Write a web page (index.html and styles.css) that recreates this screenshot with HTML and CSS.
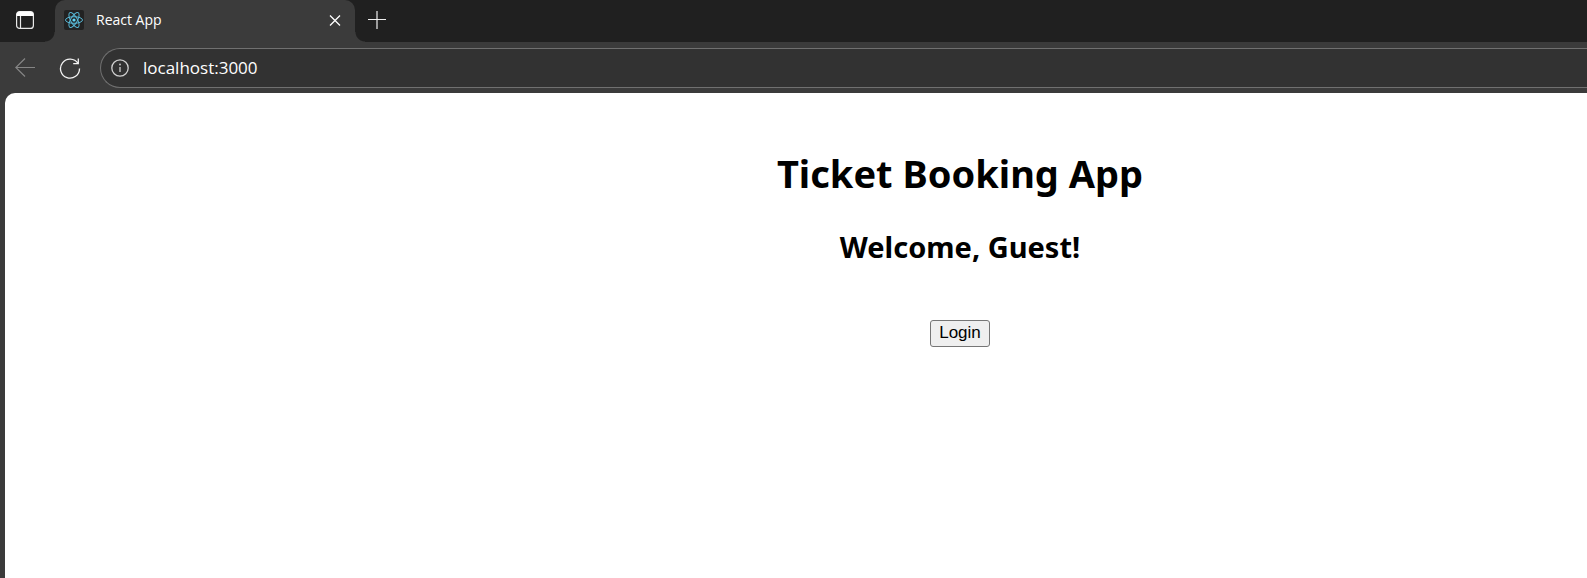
FILE: index.html
```html
<!DOCTYPE html>
<html lang="en">
<head>
<meta charset="utf-8">
<title>React App</title>
<link rel="stylesheet" href="styles.css">
</head>
<body>
<header class="tab-strip">
  <button class="icon-button tab-actions" aria-label="Tab actions">
    <svg width="20" height="20" viewBox="0 0 20 20" fill="none" stroke="#e8e8e8"><rect x="1.6" y="1.6" width="16.8" height="16.8" rx="3" stroke-width="1.2"/><path d="M2 5.500V4.500Q2 2 4.500 2H15.500Q18 2 18 4.500V5.500Z" fill="#fff" stroke="#fff"/><path d="M5.500 6V18" stroke-width="1.200"/></svg>
  </button>
  <div class="tab">
    <svg class="favicon" width="20" height="20" viewBox="0 0 20 20" fill="none" stroke="#58b8d6" stroke-width="1"><rect width="20" height="20" rx="2" fill="#222" stroke="none"/><ellipse cx="10" cy="10" rx="8.500" ry="3.300"/><ellipse cx="10" cy="10" rx="8.500" ry="3.300" transform="rotate(60 10 10)"/><ellipse cx="10" cy="10" rx="8.500" ry="3.300" transform="rotate(120 10 10)"/><circle cx="10" cy="10" r="1.600" fill="#61dafb" stroke="none"/></svg>
    <span class="tab-title">React App</span>
    <button class="icon-button" aria-label="Close tab">
      <svg width="12" height="12" viewBox="0 0 12 12" stroke="#fff" stroke-width="1.300"><path d="M1 1.500L11 11.500M11 1.500L1 11.500"/></svg>
    </button>
  </div>
  <button class="icon-button new-tab" aria-label="New tab">
    <svg width="18" height="18" viewBox="0 0 18 18" stroke="#f0f0f0" stroke-width="1.200"><path d="M9 0V18M0 8.500H18"/></svg>
  </button>
</header>
<nav class="toolbar">
  <button class="icon-button" aria-label="Back">
    <svg width="20" height="20" viewBox="0 0 20 20" fill="none" stroke="#858585" stroke-width="1.200"><path d="M20 9.500H.800M10 .500L.800 9.500L10 18.500"/></svg>
  </button>
  <button class="icon-button" aria-label="Refresh">
    <svg width="22" height="22" viewBox="0 0 22 22" fill="none" stroke="#f4f4f4" stroke-width="1.300"><path d="M19 6.500A9.500 9.500 0 1 0 20.500 11.500M19.300 1.500V6.600H14.200"/></svg>
  </button>
  <div class="address">
    <svg width="18" height="18" viewBox="0 0 18 18" fill="none" stroke="#d0d0d0" stroke-width="1.300"><circle cx="9" cy="9" r="8.200"/><path d="M9 8V13"/><circle cx="9" cy="5.500" r=".900" fill="#d0d0d0" stroke="none"/></svg>
    <input class="url" type="text" value="localhost:3000" aria-label="Address">
  </div>
</nav>
<main class="page">
  <h1 class="title">Ticket Booking App</h1>
  <h2 class="welcome">Welcome, Guest!</h2>
  <button class="login">Login</button>
</main>
</body>
</html>
```
FILE: styles.css
```css
* { box-sizing: border-box; }
body {
  margin: 0;
  min-height: 100vh;
  display: flex;
  flex-direction: column;
  overflow-x: hidden;
  background: #3b3b3b;
  font-family: "Segoe UI", "Open Sans", sans-serif;
}
.icon-button {
  display: flex;
  flex: none;
  padding: 0;
  border: 0;
  background: none;
}
.tab-strip {
  display: flex;
  align-items: stretch;
  height: 42px;
  background: #202020;
}
.tab-actions {
  width: 55px;
  padding: 0 0 2px 15px;
  align-items: center;
  background: #202020;
}
.tab {
  position: relative;
  display: flex;
  align-items: center;
  width: 300px;
  padding: 0 14px 2px 9px;
  border-radius: 10px 10px 0 0;
  background: #3b3b3b;
}
.tab::before,
.tab::after {
  content: "";
  position: absolute;
  bottom: 0;
  width: 10px;
  height: 10px;
}
.tab::before {
  right: 100%;
  background: radial-gradient(circle at 0 0, #202020 9px, #3b3b3b 10px);
}
.tab::after {
  left: 100%;
  background: radial-gradient(circle at 100% 0, #202020 9px, #3b3b3b 10px);
}
.tab-title {
  flex: 1;
  margin-left: 12px;
  padding-bottom: 2px;
  font-size: 14px;
  color: #fff;
}
.new-tab {
  width: 44px;
  align-items: center;
  justify-content: center;
  padding-bottom: 3px;
}
.toolbar {
  display: flex;
  align-items: center;
  height: 51px;
  padding-left: 15px;
}
.toolbar .icon-button + .icon-button { margin-left: 24px; }
.address {
  display: flex;
  flex: 1;
  align-items: center;
  height: 40px;
  margin-left: 19px;
  padding-left: 10px;
  border: 1px solid #707070;
  border-right: 0;
  border-radius: 20px 0 0 20px;
  background: #323232;
}
.url {
  flex: 1;
  height: 36px;
  margin-left: 14px;
  padding: 0;
  border: 0;
  outline: 0;
  background: none;
  font-family: inherit;
  font-size: 17px;
  color: #fff;
}
.page {
  flex: 1;
  display: flex;
  flex-direction: column;
  align-items: center;
  margin-left: 5px;
  padding: 53px 0 0 328px;
  border-radius: 10px 0 0 0;
  background: #fff;
  color: #000;
}
.title {
  margin: 0;
  font-family: "Segoe UI", "Noto Sans", sans-serif;
  font-size: 38px;
  line-height: 54px;
}
.welcome {
  margin: 27px 0 53px;
  font-family: "Segoe UI", "Noto Sans", sans-serif;
  font-size: 29px;
  line-height: 40px;
}
.login {
  height: 27px;
  padding: 0 8px 2px;
  border: 1px solid #767676;
  border-radius: 3px;
  background: #efefef;
  font-family: "Liberation Sans", Arial, sans-serif;
  font-size: 17px;
  color: #000;
}
```
